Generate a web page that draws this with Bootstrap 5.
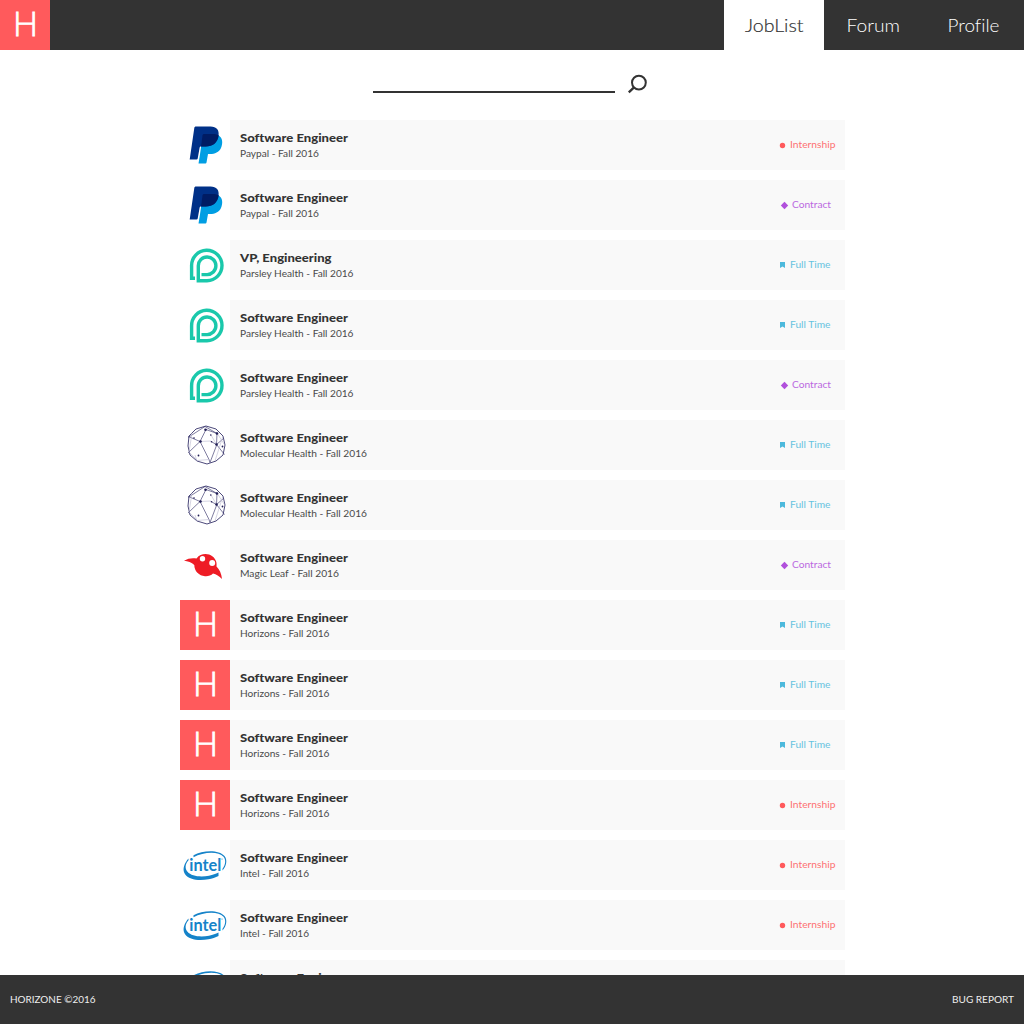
<!DOCTYPE html>
<html lang="en">
<head>
<meta charset="utf-8">
<meta name="viewport" content="width=device-width, initial-scale=1">
<title>Horizone</title>
<link rel="stylesheet" href="https://cdn.jsdelivr.net/npm/bootstrap@5.3.0/dist/css/bootstrap.min.css">
<style>
body{font-family:Lato,"Liberation Sans",sans-serif;color:#333;height:100vh;overflow:hidden;background:#fff}
.topbar{height:50px;background:#333}
.topbar .nav-link{width:100px;height:50px;padding:0;color:#fff;font-size:18.5px;font-weight:300;border-radius:0}
.topbar .nav-link.active{background:#fff;color:#333}
.searchbar{height:70px;padding:12px 0 0 373px;gap:13px}
.searchbar input{width:242px;height:31px;border:0;border-bottom:2px solid #333;border-radius:0;padding:0;background:transparent}
.joblist{width:665px;margin-left:180px;gap:10px}
.job{height:50px}
.logo{width:50px;height:50px;flex:none;display:block}
.info{background:#f9f9f9;padding:10px 0 0 10px}
.title{font-size:12px;font-weight:900;height:16px}
.sub{font-size:10.3px;height:16px}
.kind{font-size:10.3px;width:80px;margin-top:-10px}
.kind text{opacity:.85}
.internship{color:#ff5a5c}.contract{color:#b150dc}.fulltime{color:#4db9dc}
svg text{font-family:Lato,"Liberation Sans",sans-serif;font-variant-ligatures:none}
.bottombar{height:49px;background:#333;color:#fff;font-size:10.3px;padding:0 10px}
.fit{display:block;overflow:visible}
</style>
</head>
<body class="d-flex flex-column">
<svg class="d-none">
<symbol id="horizons" viewBox="0 0 50 50"><path fill="#ff5a5c" d="M0 0h50v50H0z"/><text x="13" y="35.800" font-size="32.500" font-weight="300" fill="#fff" stroke="#fff" stroke-width=".8" textLength="25" lengthAdjust="spacingAndGlyphs">H</text></symbol>
<symbol id="paypal" viewBox="0 0 50 50"><path fill="#009ee3" d="M38 15c5 3 5 8 3 13-2 4-6 6-11 6h-2l-1.500 8.500c-.1.700-.5 1-1 1H18.500l1-6 3-20z"/><path fill="#003087" d="M16 6.500h14.500c6 0 9 3.500 8 9.500-1 7-6 10.500-13 10.500h-4.500c-.8 0-1.200.5-1.400 1.200L17.700 38.500c-.1.700-.5 1-1.200 1H9.700l4.600-31.500c.1-1 .7-1.500 1.700-1.500z"/><path fill="#001c64" d="M22.500 15.500c.2-1 .8-1.500 1.700-1.500h8.500c2.300 0 4.200.3 5.900 1.200-1 7.500-6 11.300-13 11.300h-4.600z"/></symbol>
<symbol id="parsley" viewBox="0 0 50 50"><path fill="none" stroke="#1ac8ab" stroke-width="3.400" d="M15 38.200h-3.400V26A15.200 15.200 0 1 1 27 40.700h-8.700V26A8.800 8.800 0 1 1 27 34.600h-5.500"/></symbol>
<symbol id="molecular" viewBox="0 0 50 50"><g fill="none" stroke="#39366c" stroke-width=".9"><path d="M26 6l10 3 7 7 2 9-2 10-7 6-9 3-10-3-7-6-2-9 1-10 7-7z"/><path stroke-width=".65" d="M8.500 16.500l11.500 5 6-12 11 4-12-7-17 11M8 33l12-11.500M20 21.500l9 18 1 3 6.500-17 .5-13M31.500 21.800l5 2.700 7-6M36.500 24.500l8 10"/><path stroke="#bbb9d0" stroke-width=".6" d="M20 21.500l11-.5M31 15l5.500 9.500M29 39.500l-12 1M15 35l2 6M12 13l-3 19 9 9M43 16l-8 25M37 13l7 11"/></g><g fill="#211d55"><circle cx="25.500" cy="9.700" r="1.300"/><circle cx="37" cy="13.500" r="1.300"/><circle cx="20.500" cy="21.500" r="1.300"/><circle cx="36.500" cy="24.500" r="1.300"/><circle cx="18.500" cy="35.500" r=".9"/><circle cx="42.500" cy="26.500" r=".9"/><circle cx="30.800" cy="15" r=".8"/><circle cx="31.500" cy="21.800" r=".8"/><circle cx="14" cy="18" r=".8"/></g></symbol>
<symbol id="leaf" viewBox="0 0 50 50"><path fill="#ee1c25" d="M4 20.800c4-2.600 8.500-3 12.500-2.300C19 15 22 14 25.500 14c5 0 9.500 3 10.800 8 .4 2 .3 3 .2 4.500 3 3 5 7 5.500 12.500-3-3-5.500-4.500-9-5.500C31 35.500 28 36.500 25 36.200c-6-.4-10.700-5-10.700-11.200C11.500 22.500 8 21 4 20.800z"/><circle cx="22.500" cy="18.800" r="2.700" fill="#fff"/><circle cx="32.200" cy="23" r="3" fill="#fff"/></symbol>
<symbol id="intel" viewBox="0 0 50 50"><path fill="#1583c9" d="M13.500 15.300C23 10 39 9.500 44.500 16c3.200 4 2 10-2 14.500v-1.700c3-4 3.700-8.500 1-12-5-5.800-20-5-30 .5zM8.500 18.500v1.800C5 24.500 4.800 28.500 7.500 31.800c4 4.700 13.500 5.500 21.500 3.900 4-.8 6.500-1.700 9.500-3.100V36c-3 1.600-6.500 2.700-10 3.300-9.500 1.600-20 .6-23.600-5.300-3.200-5 0-11.500 3.600-15.500z"/><text x="9.300" y="31" font-size="17.300" font-weight="700" fill="#1583c9" textLength="32" lengthAdjust="spacingAndGlyphs">intel</text><circle cx="42" cy="19" r=".6" fill="#1583c9"/></symbol>
</svg>

<nav class="topbar d-flex justify-content-between flex-shrink-0">
  <a href="#" aria-label="Home"><svg class="logo"><use href="#horizons"/></svg></a>
  <div class="nav">
    <a class="nav-link active" href="#"><svg class="fit" width="100" height="50"><text x="21" y="31.500" fill="#333" stroke="#333" stroke-width=".2" textLength="58.500" lengthAdjust="spacingAndGlyphs">JobList</text></svg></a>
    <a class="nav-link" href="#"><svg class="fit" width="100" height="50"><text x="22.500" y="31.500" fill="#fff" textLength="53.500" lengthAdjust="spacingAndGlyphs">Forum</text></svg></a>
    <a class="nav-link" href="#"><svg class="fit" width="100" height="50"><text x="23.500" y="31.500" fill="#fff" textLength="52" lengthAdjust="spacingAndGlyphs">Profile</text></svg></a>
  </div>
</nav>
<form class="searchbar d-flex flex-shrink-0">
  <input type="text" aria-label="Search">
  <svg width="20" height="32" fill="none" stroke="#333" stroke-width="2"><circle cx="10.900" cy="20.600" r="6.900"/><path stroke-width="2.300" d="M6 25.400l-5.200 5"/></svg>
</form>
<main class="flex-grow-1 overflow-hidden" style="min-height:0">
  <div class="joblist d-flex flex-column" id="jobs"></div>
</main>
<footer class="bottombar d-flex justify-content-between align-items-center flex-shrink-0">
  <svg class="fit" width="86" height="49"><text x="0" y="28" fill="#eee" textLength="85.500" lengthAdjust="spacingAndGlyphs">HORIZONE ©2016</text></svg>
  <svg class="fit" width="62" height="49"><text x="0" y="28" fill="#eee" textLength="62" lengthAdjust="spacingAndGlyphs">BUG REPORT</text></svg>
</footer>
<script src="https://cdn.jsdelivr.net/npm/bootstrap@5.3.0/dist/js/bootstrap.bundle.min.js"></script>
<script>
const companies = {
  paypal: ['Paypal', 79], parsley: ['Parsley Health', 113.5], molecular: ['Molecular Health', 127],
  leaf: ['Magic Leaf', 99], horizons: ['Horizons', 89.5], intel: ['Intel', 69]
};
const kinds = {
  internship: ['Internship', 25, 45.5, '<circle cx="17.500" cy="25.500" r="2.700"/>'],
  contract: ['Contract', 27, 39, '<path d="M19.500 21.800l3.700 3.700-3.700 3.700-3.700-3.700z"/>'],
  fulltime: ['Full Time', 25, 40.500, '<path d="M15 22h5v6l-2.500-1.400L15 28z"/>']
};
const jobs = [
  ['paypal','internship'],['paypal','contract'],['parsley','fulltime','VP, Engineering'],
  ['parsley','fulltime'],['parsley','contract'],['molecular','fulltime'],['molecular','fulltime'],
  ['leaf','contract'],['horizons','fulltime'],['horizons','fulltime'],['horizons','fulltime'],
  ['horizons','internship'],['intel','internship'],['intel','internship'],['intel','internship']
];
document.getElementById('jobs').innerHTML = jobs.map(([c, k, t]) => {
  const [name, w] = companies[c], [label, x, kw, icon] = kinds[k];
  return `<div class="job d-flex"><svg class="logo"><use href="#${c}"/></svg>
  <div class="info flex-grow-1 d-flex justify-content-between"><div>
  <svg class="fit title" width="110" height="16"><text y="12.300" fill="#333" textLength="${t ? 91.5 : 108}" lengthAdjust="spacingAndGlyphs">${t || 'Software Engineer'}</text></svg>
  <svg class="fit sub" width="130" height="16"><text y="11" fill="#4a4a4a" textLength="${w}" lengthAdjust="spacingAndGlyphs">${name} - Fall 2016</text></svg></div>
  <svg class="fit kind ${k}" width="80" height="50" fill="currentColor">${icon}<text x="${x}" y="28" textLength="${kw}" lengthAdjust="spacingAndGlyphs">${label}</text></svg>
  </div></div>`;
}).join('');
</script>
</body>
</html>
